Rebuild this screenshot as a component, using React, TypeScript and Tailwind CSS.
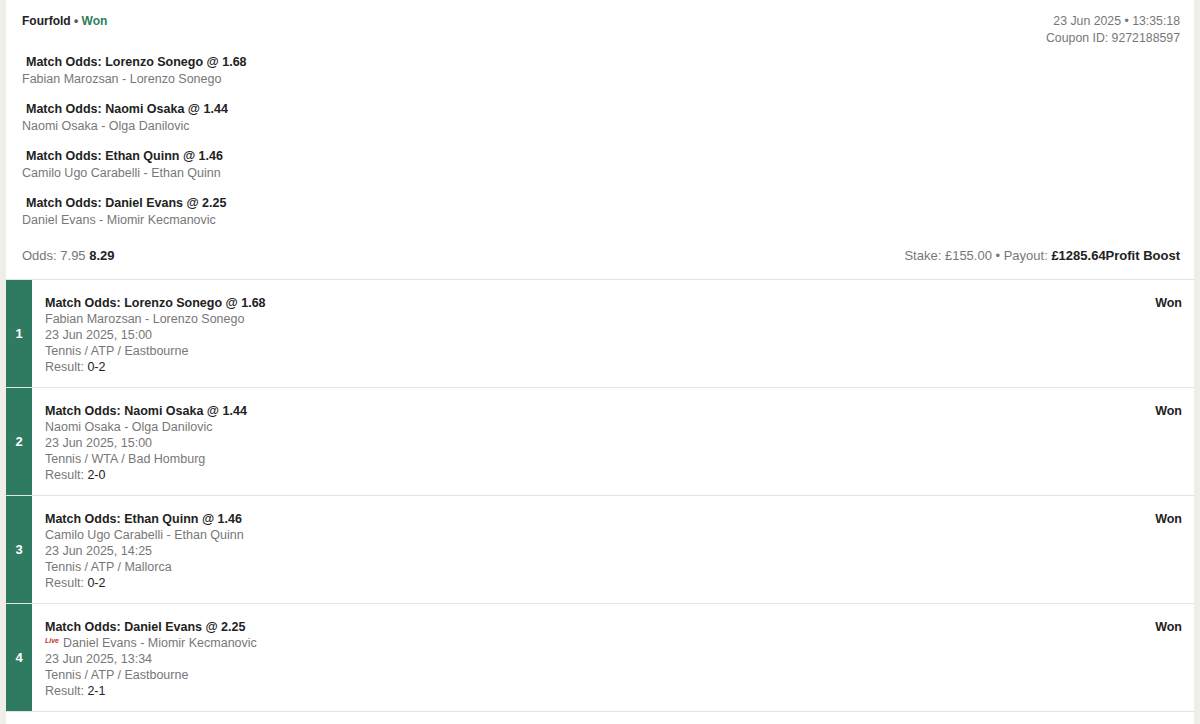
import React from "react";

const selections = [
  { title: "Match Odds: Lorenzo Sonego @ 1.68", event: "Fabian Marozsan - Lorenzo Sonego" },
  { title: "Match Odds: Naomi Osaka @ 1.44", event: "Naomi Osaka - Olga Danilovic" },
  { title: "Match Odds: Ethan Quinn @ 1.46", event: "Camilo Ugo Carabelli - Ethan Quinn" },
  { title: "Match Odds: Daniel Evans @ 2.25", event: "Daniel Evans - Miomir Kecmanovic" },
];

const legs = [
  { n: 1, title: "Match Odds: Lorenzo Sonego @ 1.68", event: "Fabian Marozsan - Lorenzo Sonego", date: "23 Jun 2025, 15:00", comp: "Tennis / ATP / Eastbourne", result: "0-2", live: false },
  { n: 2, title: "Match Odds: Naomi Osaka @ 1.44", event: "Naomi Osaka - Olga Danilovic", date: "23 Jun 2025, 15:00", comp: "Tennis / WTA / Bad Homburg", result: "2-0", live: false },
  { n: 3, title: "Match Odds: Ethan Quinn @ 1.46", event: "Camilo Ugo Carabelli - Ethan Quinn", date: "23 Jun 2025, 14:25", comp: "Tennis / ATP / Mallorca", result: "0-2", live: false },
  { n: 4, title: "Match Odds: Daniel Evans @ 2.25", event: "Daniel Evans - Miomir Kecmanovic", date: "23 Jun 2025, 13:34", comp: "Tennis / ATP / Eastbourne", result: "2-1", live: true },
];

export default function App() {
  return (
    <div
      className="w-[1200px] h-[724px] overflow-hidden bg-[#efeee9] flex px-[6px] text-[#222]"
      style={{ fontFamily: "'Liberation Sans', Arial, sans-serif" }}
    >
      <div className="flex-1 bg-white flex flex-col">
        {/* header section */}
        <div className="h-[280px] shrink-0 border-b border-[#e4e4e0] pl-[16px] pr-[14px] pt-[13px] flex flex-col">
          <div className="flex justify-between">
            <div className="text-[12px] font-bold leading-[16px]">
              Fourfold <span className="text-[#555]">•</span> <span className="text-[#2f7d5e]">Won</span>
            </div>
            <div className="text-right text-[12.3px] leading-[17px] text-[#777]">
              <div>23 Jun 2025 • 13:35:18</div>
              <div>Coupon ID: 9272188597</div>
            </div>
          </div>
          <div className="mt-[7px] flex flex-col gap-[13px]">
            {selections.map((s) => (
              <div key={s.title} className="text-[12.5px] leading-[17px]">
                <div className="font-bold pl-[4px]">{s.title}</div>
                <div className="text-[#777]">{s.event}</div>
              </div>
            ))}
          </div>
          <div className="mt-auto mb-[15px] flex justify-between text-[13px] leading-[16px]">
            <div className="text-[#777]">
              Odds: 7.95 <span className="font-bold text-[#222]">8.29</span>
            </div>
            <div className="text-[#777]">
              Stake: £155.00 • Payout: <span className="font-bold text-[#222]">£1285.64Profit Boost</span>
            </div>
          </div>
        </div>
        {/* legs */}
        {legs.map((l) => (
          <div key={l.n} className="h-[108px] shrink-0 flex border-b border-[#e4e4e0]">
            <div className="w-[26px] bg-[#2f7b62] flex items-center justify-center text-white font-bold text-[13px]">
              {l.n}
            </div>
            <div className="flex-1 flex justify-between pl-[13px] pr-[12px] pt-[15px]">
              <div className="text-[12.5px] leading-[16px] text-[#777]">
                <div className="font-bold text-[#222]">{l.title}</div>
                <div className="flex items-center">
                  {l.live && (
                    <span className="text-[#c0392b] italic font-bold text-[7px] mr-[4px] -mt-[4px]">Live</span>
                  )}
                  {l.event}
                </div>
                <div>{l.date}</div>
                <div>{l.comp}</div>
                <div>
                  Result: <span className="text-[#222]">{l.result}</span>
                </div>
              </div>
              <div className="font-bold text-[12.5px] leading-[16px]">Won</div>
            </div>
          </div>
        ))}
      </div>
    </div>
  );
}
